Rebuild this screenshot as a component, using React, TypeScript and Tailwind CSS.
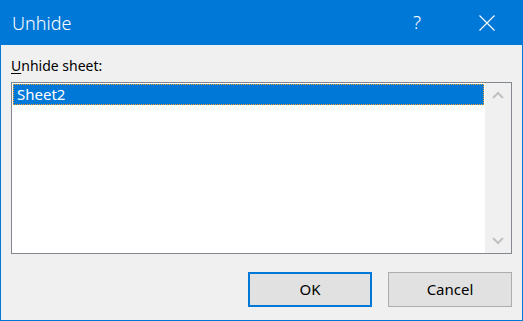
export default function App() {
  return (
    <div
      className="flex h-[321px] w-[523px] flex-col border border-t-0 border-[#0078d7] bg-[#f0f0f0] text-black"
      style={{ fontFamily: '"Noto Sans", "Open Sans", sans-serif' }}
    >
      {/* title bar */}
      <div className="flex h-[45px] shrink-0 items-center bg-[#0078d7] pl-[11px] text-white">
        <span className="text-[18px] font-light leading-none">Unhide</span>
        <span className="ml-auto mr-[58px] text-[19px] font-light leading-none">?</span>
        <svg width="16" height="16" viewBox="0 0 16 16" className="mr-[27px]">
          <path d="M0.5 0.5 L15.5 15.5 M15.5 0.5 L0.5 15.5" stroke="white" strokeWidth="1.1" fill="none" />
        </svg>
      </div>

      <div className="flex flex-1 flex-col px-[10px]">
        <label className="mt-[11px] text-[14px] leading-[20px]">
          <span className="underline underline-offset-2">U</span>nhide sheet:
        </label>

        {/* list box */}
        <div className="mt-[6px] flex h-[172px] border border-[#828790] bg-white">
          <div className="flex-1 p-[1px]">
            <div className="flex h-[21px] items-center border border-dotted border-[#f0a030] bg-[#0078d7] pl-[3px] text-[15px] text-white">
              Sheet2
            </div>
          </div>
          <div className="flex w-[26px] flex-col items-center justify-between bg-[#f0f0f0] py-[8px]">
            <svg width="12" height="8" viewBox="0 0 12 8">
              <path d="M1 7 L6 2 L11 7" stroke="#c2c2c2" strokeWidth="2" fill="none" />
            </svg>
            <svg width="12" height="8" viewBox="0 0 12 8">
              <path d="M1 1 L6 6 L11 1" stroke="#c2c2c2" strokeWidth="2" fill="none" />
            </svg>
          </div>
        </div>

        {/* buttons */}
        <div className="mt-[18px] flex justify-end gap-[16px]">
          <button className="h-[35px] w-[124px] border-2 border-[#0078d7] bg-[#e1e1e1] text-[15px]">
            OK
          </button>
          <button className="h-[35px] w-[124px] border border-[#adadad] bg-[#e1e1e1] text-[15px]">
            Cancel
          </button>
        </div>
      </div>
    </div>
  );
}
